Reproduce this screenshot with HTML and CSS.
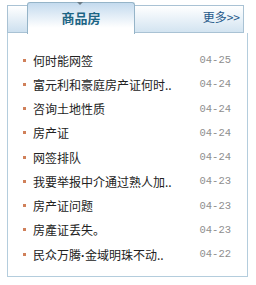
FILE: index.html
```html
<!DOCTYPE html>
<html>
<head>
<meta charset="utf-8">
<link rel="stylesheet" href="styles.css">
</head>
<body>
<div class="box">
  <div class="head">
    <div class="head-left"></div>
    <div class="tab"><span class="tri"></span><span class="title">商品房</span></div>
    <div class="head-right"><a class="more">更多&gt;&gt;</a></div>
  </div>
  <ul class="list">
    <li><span class="dot"></span><span class="txt">何时能网签</span><span class="date">04-25</span></li>
    <li><span class="dot"></span><span class="txt">富元利和豪庭房产证何时..</span><span class="date">04-24</span></li>
    <li><span class="dot"></span><span class="txt">咨询土地性质</span><span class="date">04-24</span></li>
    <li><span class="dot"></span><span class="txt">房产证</span><span class="date">04-24</span></li>
    <li><span class="dot"></span><span class="txt">网签排队</span><span class="date">04-24</span></li>
    <li><span class="dot"></span><span class="txt">我要举报中介通过熟人加..</span><span class="date">04-23</span></li>
    <li><span class="dot"></span><span class="txt">房产证问题</span><span class="date">04-23</span></li>
    <li><span class="dot"></span><span class="txt">房產证丢失。</span><span class="date">04-23</span></li>
    <li><span class="dot"></span><span class="txt">民众万腾<span class="mid">·</span>金域明珠不动..</span><span class="date">04-22</span></li>
  </ul>
</div>
</body>
</html>
```
FILE: styles.css
```css
html, body {
  margin: 0;
  padding: 0;
  background: #ffffff;
}
body {
  font-family: "Noto Sans CJK SC", "Liberation Sans", sans-serif;
}
.box {
  margin: 2px 0 0 7px;
  width: 241px;
}
.head {
  display: flex;
  align-items: flex-end;
  height: 31px;
}
.head-left {
  width: 20px;
  height: 28px;
  box-sizing: border-box;
  border: 1px solid #a9c2d4;
  border-right: none;
  background: linear-gradient(#ffffff, #cde0ef);
}
.tab {
  position: relative;
  width: 108px;
  height: 32px;
  margin-bottom: -1px;
  box-sizing: border-box;
  border: 1px solid #95b4c8;
  border-bottom: none;
  border-radius: 3px 3px 0 0;
  background: linear-gradient(#c4daee, #ffffff 80%);
  display: flex;
  justify-content: center;
  align-items: center;
  padding-bottom: 1px;
}
.tri {
  position: absolute;
  top: -1px;
  left: 49px;
  width: 0;
  height: 0;
  border-left: 3px solid transparent;
  border-right: 3px solid transparent;
  border-top: 3px solid #6b7b86;
}
.title {
  font-size: 13px;
  font-weight: bold;
  color: #1c6484;
  margin-top: -1px;
}
.head-right {
  width: 109px;
  height: 28px;
  box-sizing: border-box;
  border: 1px solid #a9c2d4;
  border-left: none;
  background: linear-gradient(#ffffff, #d3e4f1);
  display: flex;
  justify-content: flex-end;
  align-items: flex-start;
  padding: 4px 3px 0 0;
}
.more {
  font-size: 12px;
  color: #26598a;
  line-height: 14px;
}
.list {
  list-style: none;
  margin: 0;
  padding: 15px 16px 0 15px;
  border: 1px solid #b4cddd;
  border-top: none;
  width: 241px;
  height: 244px;
  box-sizing: border-box;
}
.list li {
  display: flex;
  align-items: center;
  height: 24.25px;
  font-size: 12px;
  color: #222222;
}
.dot {
  width: 3px;
  height: 3px;
  background: #d0805a;
  margin-right: 7px;
  flex: none;
}
.txt {
  flex: 1;
  white-space: nowrap;
}
.mid {
  font-family: "Liberation Sans", sans-serif;
  font-weight: bold;
}
.date {
  font-family: "Liberation Mono", monospace;
  font-size: 10.5px;
  color: #8e8e8e;
}
```
